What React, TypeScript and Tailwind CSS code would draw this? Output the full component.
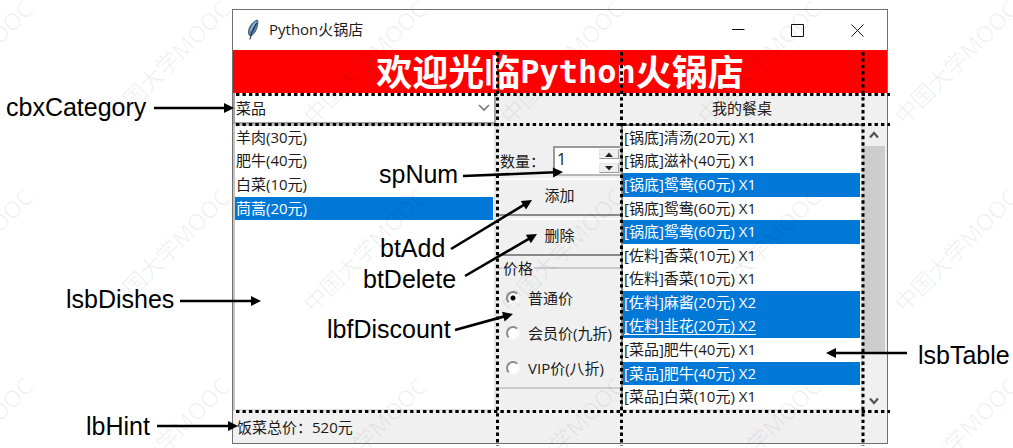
import React, { useState } from "react";

const dishes = ["羊肉(30元)", "肥牛(40元)", "白菜(10元)", "茼蒿(20元)"];

const orders = [
  { text: "[锅底]清汤(20元) X1", on: false },
  { text: "[锅底]滋补(40元) X1", on: false },
  { text: "[锅底]鸳鸯(60元) X1", on: true },
  { text: "[锅底]鸳鸯(60元) X1", on: false },
  { text: "[锅底]鸳鸯(60元) X1", on: true },
  { text: "[佐料]香菜(10元) X1", on: false },
  { text: "[佐料]香菜(10元) X1", on: false },
  { text: "[佐料]麻酱(20元) X2", on: true },
  { text: "[佐料]韭花(20元) X2", on: true, active: true },
  { text: "[菜品]肥牛(40元) X1", on: false },
  { text: "[菜品]肥牛(40元) X2", on: true },
  { text: "[菜品]白菜(10元) X1", on: false },
];

const prices = ["普通价", "会员价(九折)", "VIP价(八折)"];

function Feather() {
  return (
    <svg viewBox="0 0 16 22" className="h-[22px] w-4" aria-hidden="true">
      <path d="M12.6 1C8.6 2 4.4 6.600 3.600 11.400c-.3 2 .1 3.600.6 4.800l1.900.6c2.600-1.300 4.600-4.200 5.600-7.400C12.700 6.200 13.200 2.800 12.600 1z" fill="#5585b5" stroke="#4a5866" strokeWidth="1" />
      <path d="M11.400 3C8.500 5.200 6.500 8.500 5.800 12" fill="none" stroke="#8db8de" strokeWidth="1.500" />
      <path d="M11.800 4C9 8.200 6.500 12.500 4.800 20.500" fill="none" stroke="#1d2630" strokeWidth="1.100" />
    </svg>
  );
}

function TitleBar() {
  return (
    <header className="flex h-10 items-center bg-white">
      <div className="ml-3 flex flex-1 items-center gap-2">
        <Feather />
        <h1 className="pb-0.5 text-[15px]">Python火锅店</h1>
      </div>
      <button aria-label="最小化" className="flex h-full w-[59px] items-center justify-center">
        <svg viewBox="0 0 13 13" className="size-[13px]"><path d="M0 5.500h12.500" stroke="#111" /></svg>
      </button>
      <button aria-label="最大化" className="flex h-full w-[59px] items-center justify-center">
        <svg viewBox="0 0 13 13" className="size-[13px]"><path d="M.5.5h12v12H.5z" fill="none" stroke="#111" /></svg>
      </button>
      <button aria-label="关闭" className="flex h-full w-[60px] items-center justify-center">
        <svg viewBox="0 0 13 13" className="size-[13px]"><path d="M.5.5l12 12M12.500.5l-12 12" stroke="#111" /></svg>
      </button>
    </header>
  );
}

function Dishes() {
  const [picked, setPicked] = useState(3);
  return (
    <ul role="listbox" aria-label="菜品" className="grid grid-rows-12 border-2 border-[#c4c4c4] border-r-[#e3e3e3] border-b-[#e3e3e3] bg-white pr-px">
      {dishes.map((d, i) => (
        <li
          key={d}
          role="option"
          aria-selected={i === picked}
          onClick={() => setPicked(i)}
          className={i === picked ? "flex items-center bg-[#0078d7] pb-0.5 pl-px text-white" : "flex items-center pb-0.5 pl-px"}
        >
          {d}
        </li>
      ))}
    </ul>
  );
}

function Orders() {
  return (
    <ul role="listbox" aria-label="我的餐桌" aria-multiselectable="true" className="grid h-[287px] grid-rows-12 border-2 border-[#8a8a8a] border-r-[#e3e3e3] border-b-[#e3e3e3] bg-white pr-px">
      {orders.map((o, i) => (
        <li
          key={i}
          role="option"
          aria-selected={o.on}
          className={o.on ? "flex items-center bg-[#0078d7] pb-0.5 pl-px text-white" : "flex items-center pb-0.5 pl-px"}
        >
          <span className={o.active ? "underline decoration-1 underline-offset-3" : ""}>{o.text}</span>
        </li>
      ))}
    </ul>
  );
}

const bevel = "h-[38px] border-t-2 border-b-2 border-t-[#fafafa] border-b-[#8a8a8a] pb-1";
const step = "flex h-[10px] items-center justify-center border border-[#e6e6e6] border-r-[#aaaaaa] border-b-[#999999] bg-[#efefef]";

function Controls() {
  const [num, setNum] = useState(1);
  const [price, setPrice] = useState(0);
  return (
    <div className="flex flex-col pt-[22px] pl-0.5">
      <div className="flex h-[30px] items-center justify-between">
        <label htmlFor="num" className="pl-0.5">数量：</label>
        <div className="flex h-[30px] w-[68px] border-2 border-[#9a9a9a] border-r-[#dddddd] border-b-[#b8b8b8] bg-white">
          <input id="num" value={num} onChange={(e) => setNum(Number(e.target.value) || 1)} className="w-0 flex-1 pb-1 pl-0.5 text-base outline-none" />
          <div className="flex w-5 flex-col justify-between py-px">
            <button aria-label="增加" onClick={() => setNum(num + 1)} className={step}>
              <svg viewBox="0 0 8 5" className="h-[5px] w-2"><path d="M0 5L4 .5 8 5z" fill="#222" /></svg>
            </button>
            <button aria-label="减少" onClick={() => setNum(Math.max(1, num - 1))} className={step}>
              <svg viewBox="0 0 8 5" className="h-[5px] w-2"><path d="M0 0L4 4.500 8 0z" fill="#222" /></svg>
            </button>
          </div>
        </div>
      </div>
      <button className={`mt-0.5 ${bevel}`}>添加</button>
      <button className={`mt-0.5 ${bevel}`}>删除</button>
      <fieldset className="border-t-2 border-b-2 border-[#cdcdcd] pb-0.5">
        <legend className="ml-1 px-px leading-6">价格</legend>
        <div className="flex flex-col">
          {prices.map((p, i) => (
            <label key={p} className="flex h-[35px] items-center gap-2 pl-2 whitespace-nowrap">
              <input
                type="radio"
                name="price"
                checked={price === i}
                onChange={() => setPrice(i)}
                className="size-[14px] shrink-0 appearance-none rounded-full border-2 border-[#8c8c8c] border-r-[#f8f8f8] border-b-[#f8f8f8] bg-white checked:bg-[radial-gradient(circle,#000_2px,#fff_3px)]"
              />
              {p}
            </label>
          ))}
        </div>
      </fieldset>
    </div>
  );
}

function Scrollbar() {
  return (
    <div className="flex flex-col items-center bg-[#f0f0f0] pr-0.5">
      <button aria-label="向上滚动" className="flex h-[22px] w-full items-center justify-center">
        <svg viewBox="0 0 10 8" className="h-2 w-[10px]"><path d="M1 6.500L5 2l4 4.500" fill="none" stroke="#555" strokeWidth="2.200" /></svg>
      </button>
      <div className="mb-[39px] w-full flex-1 bg-[#cdcdcd]" />
      <button aria-label="向下滚动" className="flex h-5 w-full items-center justify-center">
        <svg viewBox="0 0 10 8" className="h-2 w-[10px]"><path d="M1 1.500L5 6l4-4.500" fill="none" stroke="#555" strokeWidth="2.200" /></svg>
      </button>
    </div>
  );
}

const arrows = [
  [154, 108, 234, 108],
  [463, 176, 563, 172],
  [451, 249, 532, 200],
  [465, 276, 537, 234],
  [455, 330, 513, 314],
  [180, 301, 261, 301],
  [157, 426, 238, 426],
  [907, 353, 826, 353],
];

function Callouts() {
  return (
    <div className="pointer-events-none absolute inset-0 font-['Liberation_Sans',Arial,sans-serif] text-[25px] leading-7 text-black">
      <svg className="absolute top-0 left-0 h-[448px] w-[1013px]" viewBox="0 0 1013 448" aria-hidden="true">
        <g stroke="#000" strokeWidth="3" strokeDasharray="3.400 3.050">
          <path d="M236 94.500H890M236 124.500H890M236 411.500H890" />
          <path d="M497.500 52V446M621.500 52V446M863 52V446" />
        </g>
        {arrows.map(([x1, y1, x2, y2]) => {
          const len = Math.hypot(x2 - x1, y2 - y1);
          const ux = (x2 - x1) / len;
          const uy = (y2 - y1) / len;
          return (
            <g key={`${x1}-${y1}`}>
              <path d={`M${x1} ${y1}L${x2 - ux * 8} ${y2 - uy * 8}`} stroke="#000" strokeWidth="2.600" />
              <path d={`M${x2} ${y2}L${x2 - ux * 10 - uy * 5} ${y2 - uy * 10 + ux * 5}L${x2 - ux * 10 + uy * 5} ${y2 - uy * 10 - ux * 5}z`} />
            </g>
          );
        })}
      </svg>
      <span className="absolute top-[93px] left-[6px]">cbxCategory</span>
      <span className="absolute top-[160px] left-[379px]">spNum</span>
      <span className="absolute top-[234px] left-[380px]">btAdd</span>
      <span className="absolute top-[265px] left-[363px]">btDelete</span>
      <span className="absolute top-[315px] left-[327px]">lbfDiscount</span>
      <span className="absolute top-[285px] left-[66px]">lsbDishes</span>
      <span className="absolute top-[412px] left-[86px]">lbHint</span>
      <span className="absolute top-[341px] left-[918px]">lsbTable</span>
    </div>
  );
}

function Watermark() {
  const xs = [-29, 168, 365, 562, 759, 956];
  const ys = [62, 250, 439];
  return (
    <div aria-hidden="true" className="pointer-events-none absolute inset-0 overflow-hidden">
      {ys.map((y) =>
        xs.map((x) => (
          <span
            key={`${x}-${y}`}
            className="absolute -translate-x-1/2 -translate-y-1/2 -rotate-45 text-[23px] leading-6 whitespace-nowrap text-black/[0.06]"
            style={{ left: x, top: y }}
          >
            中国大学MOOC
          </span>
        )),
      )}
    </div>
  );
}

export default function App() {
  return (
    <div className="relative min-h-screen overflow-hidden bg-white pt-[9px] pr-[125px] pb-1 pl-[232px] font-['Open_Sans','Noto_Sans_CJK_SC',sans-serif] text-[15px] leading-5 text-[#1a1a1a]">
      <main className="border border-[#707070] bg-[#f0f0f0]">
        <TitleBar />
        <h2 className="flex h-[43px] items-center justify-center bg-[#ff0000] pb-1 font-['Noto_Sans_CJK_SC',sans-serif] text-[36px] leading-none font-bold whitespace-nowrap text-white">
          欢迎光临<span className="pt-1 font-['DejaVu_Sans_Mono',monospace] text-[32px]">Python</span>火锅店
        </h2>
        <div className="grid grid-cols-[263fr_125px_242fr_24px] grid-rows-[31px_auto]">
          <div className="relative flex border-2 border-t-0 border-[#a5a5a5] bg-white">
            <select aria-label="菜品分类" className="w-full appearance-none bg-white pl-px outline-none">
              <option>菜品</option>
              <option>锅底</option>
              <option>佐料</option>
            </select>
            <svg viewBox="0 0 12 8" className="pointer-events-none absolute top-[11px] right-[4px] h-2 w-3"><path d="M1 1l5 5 5-5" fill="none" stroke="#777" strokeWidth="1.600" /></svg>
          </div>
          <div />
          <div className="flex items-center justify-center pb-0.5">我的餐桌</div>
          <div />
          <Dishes />
          <Controls />
          <Orders />
          <Scrollbar />
        </div>
        <p className="flex h-8 items-center pl-1">饭菜总价：520元</p>
      </main>
      <Watermark />
      <Callouts />
    </div>
  );
}
